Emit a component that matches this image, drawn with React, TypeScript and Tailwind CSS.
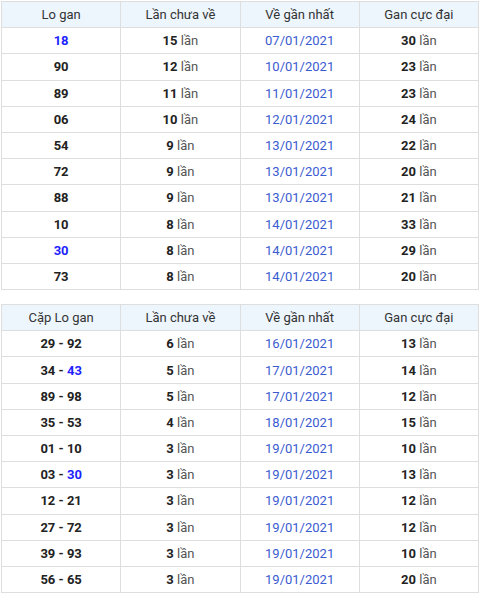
import React from "react";

type Row = [React.ReactNode, number, string, number];

const blue = "text-[#1f1fff]";

const t1: Row[] = [
  [<span className={blue}>18</span>, 15, "07/01/2021", 30],
  ["90", 12, "10/01/2021", 23],
  ["89", 11, "11/01/2021", 23],
  ["06", 10, "12/01/2021", 24],
  ["54", 9, "13/01/2021", 22],
  ["72", 9, "13/01/2021", 20],
  ["88", 9, "13/01/2021", 21],
  ["10", 8, "14/01/2021", 33],
  [<span className={blue}>30</span>, 8, "14/01/2021", 29],
  ["73", 8, "14/01/2021", 20],
];

const t2: Row[] = [
  ["29 - 92", 6, "16/01/2021", 13],
  [<>34 - <span className={blue}>43</span></>, 5, "17/01/2021", 14],
  ["89 - 98", 5, "17/01/2021", 12],
  ["35 - 53", 4, "18/01/2021", 15],
  ["01 - 10", 3, "19/01/2021", 10],
  [<>03 - <span className={blue}>30</span></>, 3, "19/01/2021", 13],
  ["12 - 21", 3, "19/01/2021", 12],
  ["27 - 72", 3, "19/01/2021", 12],
  ["39 - 93", 3, "19/01/2021", 10],
  ["56 - 65", 3, "19/01/2021", 20],
];

function Times({ n }: { n: number }) {
  return (
    <>
      <span className="font-bold text-[#222]">{n}</span>{" "}
      <span className="text-[#555]">lần</span>
    </>
  );
}

function Table({ first, rows }: { first: string; rows: Row[] }) {
  const cell = "border border-[#dedede] text-center h-[26.2px] p-0 align-middle";
  return (
    <table className="w-[478px] border-collapse table-fixed">
      <thead>
        <tr className="bg-[#edf5fd]">
          {[first, "Lần chưa về", "Về gần nhất", "Gan cực đại"].map((h) => (
            <th key={h} className={`${cell} font-normal text-[#333]`}>
              {h}
            </th>
          ))}
        </tr>
      </thead>
      <tbody>
        {rows.map((r, i) => (
          <tr key={i}>
            <td className={`${cell} font-bold text-[#222]`}>{r[0]}</td>
            <td className={cell}>
              <Times n={r[1]} />
            </td>
            <td className={`${cell} text-[#3a5bd0]`}>{r[2]}</td>
            <td className={cell}>
              <Times n={r[3]} />
            </td>
          </tr>
        ))}
      </tbody>
    </table>
  );
}

export default function App() {
  return (
    <div
      className="w-[480px] h-[597px] bg-white pl-[1px] pt-[1px] text-[13px] leading-none"
      style={{ fontFamily: "Roboto, 'Noto Sans', sans-serif" }}
    >
      <div className="flex flex-col gap-[14px]">
        <Table first="Lo gan" rows={t1} />
        <Table first="Cặp Lo gan" rows={t2} />
      </div>
    </div>
  );
}
